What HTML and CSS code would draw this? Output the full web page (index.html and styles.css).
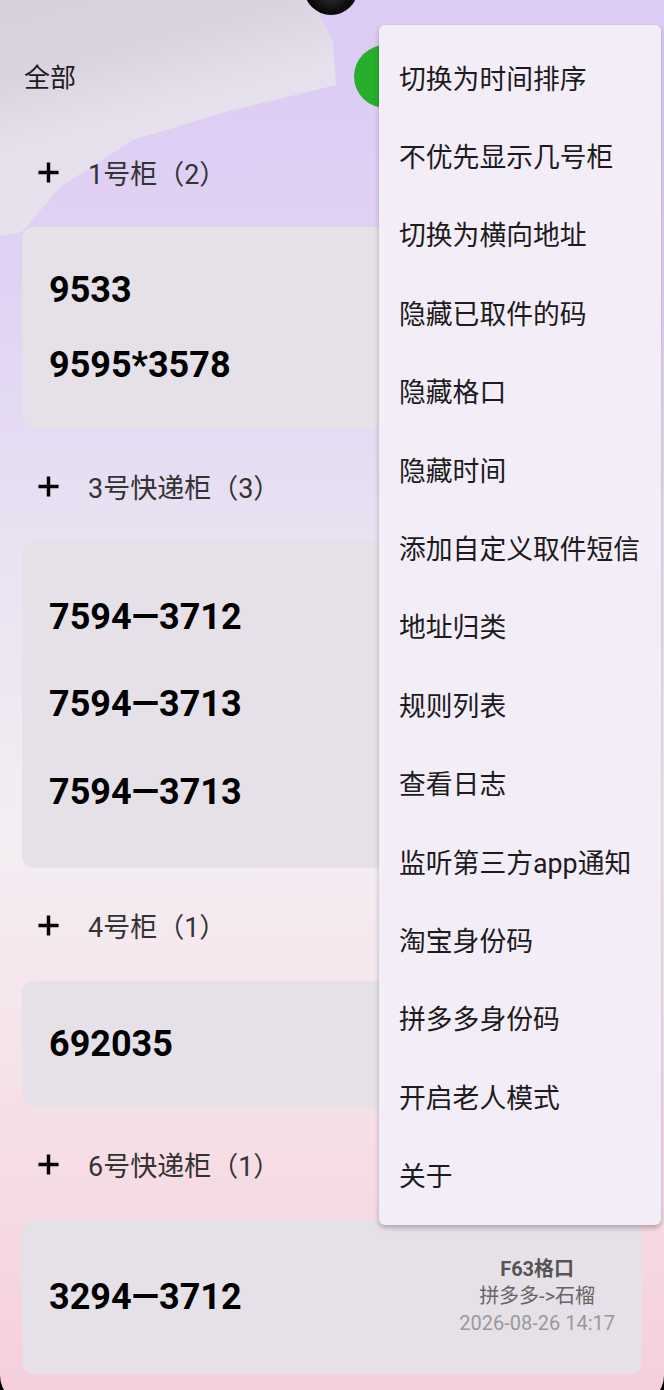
FILE: index.html
```html
<!DOCTYPE html>
<html lang="zh-CN">
<head>
    <meta charset="UTF-8">
    <meta name="viewport" content="width=device-width, initial-scale=1.0">
    <title>取件码</title>
    <link rel="stylesheet" href="styles.css">
</head>
<body>
    <div class="screen">
        <header class="topbar">
            <span class="title">全部</span>
            <span class="dot"></span>
        </header>

        <main class="list">
            <div class="group-head">
                <svg class="plus" viewBox="0 0 24 24"><path d="M12 1.5v21M1.5 12h21"/></svg>
                <span>1号柜（2）</span>
            </div>
            <div class="card">
                <div class="row">9533</div>
                <div class="row">9595*3578</div>
            </div>

            <div class="group-head">
                <svg class="plus" viewBox="0 0 24 24"><path d="M12 1.5v21M1.5 12h21"/></svg>
                <span>3号快递柜（3）</span>
            </div>
            <div class="card spaced">
                <div class="row tall">7594—3712</div>
                <div class="row tall">7594—3713</div>
                <div class="row tall">7594—3713</div>
            </div>

            <div class="group-head">
                <svg class="plus" viewBox="0 0 24 24"><path d="M12 1.5v21M1.5 12h21"/></svg>
                <span>4号柜（1）</span>
            </div>
            <div class="card">
                <div class="row">692035</div>
            </div>

            <div class="group-head">
                <svg class="plus" viewBox="0 0 24 24"><path d="M12 1.5v21M1.5 12h21"/></svg>
                <span>6号快递柜（1）</span>
            </div>
            <div class="card">
                <div class="row big">
                    <span>3294—3712</span>
                    <div class="info">
                        <div class="slot">F63格口</div>
                        <div class="from">拼多多-&gt;石榴</div>
                        <div class="time">2026-08-26 14:17</div>
                    </div>
                </div>
            </div>
        </main>

        <!-- overflow menu -->
        <ul class="menu">
            <li>切换为时间排序</li>
            <li>不优先显示几号柜</li>
            <li>切换为横向地址</li>
            <li>隐藏已取件的码</li>
            <li>隐藏格口</li>
            <li>隐藏时间</li>
            <li>添加自定义取件短信</li>
            <li>地址归类</li>
            <li>规则列表</li>
            <li>查看日志</li>
            <li>监听第三方app通知</li>
            <li>淘宝身份码</li>
            <li>拼多多身份码</li>
            <li>开启老人模式</li>
            <li>关于</li>
        </ul>

        <div class="camera"></div>
        <div class="frame"></div>
    </div>
</body>
</html>
```

FILE: styles.css
```css
* {
    box-sizing: border-box;
}

body {
    margin: 0;
    font-family: Roboto, "Noto Sans CJK SC", sans-serif;
    color: #1d1b20;
}

.screen {
    position: relative;
    width: 664px;
    height: 1390px;
    overflow: hidden;
    background: linear-gradient(180deg, #dccbf4 0%, #e0d2f4 20%, #e9e1f2 38%, #f3eef3 60%, #f6e3ea 76%, #f5cfdc 100%);
}

/* brush stroke from the wallpaper */
.screen::before {
    content: "";
    position: absolute;
    left: 0;
    top: 0;
    width: 340px;
    height: 240px;
    background: linear-gradient(165deg, #d7d1de 0%, #dad4e1 25%, #e5e0ec 45%, #e8e3ef 100%);
    clip-path: polygon(0 0, 305px 0, 318px 12px, 333px 40px, 336px 85px, 233px 110px, 133px 140px, 60px 187px, 22px 232px, 0 236px);
}

.topbar {
    position: relative;
    display: flex;
    align-items: flex-start;
    height: 114px;
    padding: 40px 0 0 24px;
}

.title {
    font-size: 26px;
    line-height: 76px;
}

.dot {
    width: 63px;
    height: 63px;
    margin: 5px 0 0 278px;
    border-radius: 50%;
    background: #27ae2a;
}

.list {
    position: relative;
    padding: 0 22px;
}

.group-head {
    display: flex;
    align-items: center;
    height: 60px;
    margin: 28px 0 25px;
    padding-left: 15px;
    font-size: 27px;
    color: #333;
}

.plus {
    width: 23px;
    height: 23px;
    margin-right: 28px;
    fill: none;
    stroke: #000;
    stroke-width: 3.6;
}

.card {
    padding: 25.5px 27px;
    border-radius: 12px;
    background: #e6e1e8;
}

.card.spaced {
    padding: 32px 27px;
}

.row {
    display: flex;
    align-items: center;
    justify-content: space-between;
    height: 75px;
    font-size: 36px;
    font-weight: bold;
    color: #000;
}

.row.tall {
    height: 87.5px;
}

.row.big {
    height: 103px;
}

.info {
    text-align: center;
    font-size: 20px;
    line-height: 27px;
    font-weight: normal;
}

.slot {
    font-weight: bold;
    color: #555;
}

.from {
    color: #666;
}

.time {
    color: #999;
}

.menu {
    position: absolute;
    left: 379px;
    top: 25px;
    width: 282px;
    margin: 0;
    padding: 13px 0 11px;
    list-style: none;
    border-radius: 6px;
    background: #f3edf7;
    box-shadow: 0 3px 5px rgba(0, 0, 0, 0.25);
}

.menu li {
    display: flex;
    align-items: center;
    height: 78.4px;
    padding-left: 20px;
    font-size: 26.8px;
    color: #1d1b20;
}

.camera {
    position: absolute;
    left: 304px;
    top: -39px;
    width: 54px;
    height: 54px;
    border-radius: 50%;
    background: radial-gradient(circle at 50% 55%, #3a3a3a 0%, #111 45%, #000 70%);
}

/* rounded display corners */
.frame {
    position: absolute;
    left: 0;
    right: 0;
    top: -100px;
    height: 1505px;
    border-radius: 0 0 30px 30px;
    box-shadow: 0 0 0 40px #000;
    pointer-events: none;
}
```
